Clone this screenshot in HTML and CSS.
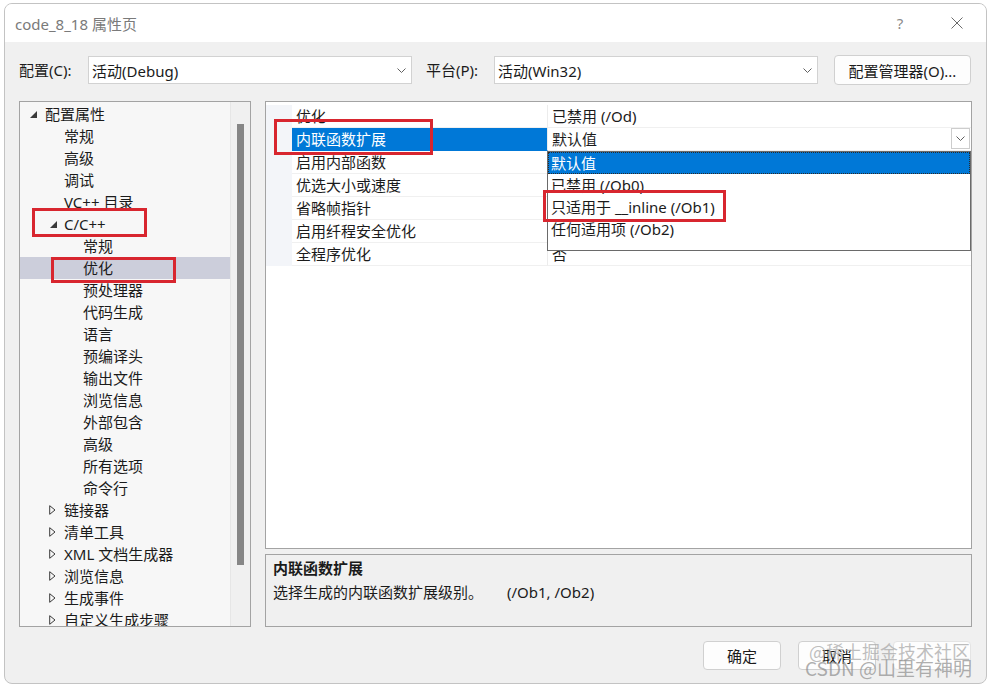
FILE: index.html
```html
<!DOCTYPE html>
<html lang="zh-CN">
<head>
<meta charset="utf-8">
<title>code_8_18 属性页</title>
<link rel="stylesheet" href="styles.css">
</head>
<body>
<div class="window">
  <div class="titlebar">
    <span class="title">code_8_18 属性页</span>
    <span class="help">?</span>
    <span class="close"><svg width="12" height="12" viewBox="0 0 12 12"><path d="M0.5 0.5 L11.5 11.5 M11.5 0.5 L0.5 11.5" stroke="#6a6a6a" stroke-width="1" fill="none"/></svg></span>
  </div>

  <div class="toolbar">
    <span class="label label-config">配置(C):</span>
    <div class="select"><span class="select-text">活动(Debug)</span><svg class="chev" width="9" height="5" viewBox="0 0 9 5"><polyline points="0.5,0.5 4.5,4.5 8.5,0.5" stroke="#606060" fill="none"/></svg></div>
    <span class="label label-platform">平台(P):</span>
    <div class="select"><span class="select-text">活动(Win32)</span><svg class="chev" width="9" height="5" viewBox="0 0 9 5"><polyline points="0.5,0.5 4.5,4.5 8.5,0.5" stroke="#606060" fill="none"/></svg></div>
    <button class="btn btn-manager">配置管理器(O)...</button>
  </div>

  <div class="main">
    <div class="tree">
      <div class="tree-list">
        <div class="node l0"><span class="tog"><svg width="9" height="9" viewBox="0 0 9 9"><polygon points="8,1 8,8 1,8" fill="#3a3a3a"/></svg></span><span>配置属性</span></div>
        <div class="node l1"><span class="tog"></span><span>常规</span></div>
        <div class="node l1"><span class="tog"></span><span>高级</span></div>
        <div class="node l1"><span class="tog"></span><span>调试</span></div>
        <div class="node l1"><span class="tog"></span><span>VC++ 目录</span></div>
        <div class="node l1"><span class="tog"><svg width="9" height="9" viewBox="0 0 9 9"><polygon points="8,1 8,8 1,8" fill="#3a3a3a"/></svg></span><span>C/C++</span></div>
        <div class="node l2"><span class="tog"></span><span>常规</span></div>
        <div class="node l2 selected"><span class="tog"></span><span>优化</span></div>
        <div class="node l2"><span class="tog"></span><span>预处理器</span></div>
        <div class="node l2"><span class="tog"></span><span>代码生成</span></div>
        <div class="node l2"><span class="tog"></span><span>语言</span></div>
        <div class="node l2"><span class="tog"></span><span>预编译头</span></div>
        <div class="node l2"><span class="tog"></span><span>输出文件</span></div>
        <div class="node l2"><span class="tog"></span><span>浏览信息</span></div>
        <div class="node l2"><span class="tog"></span><span>外部包含</span></div>
        <div class="node l2"><span class="tog"></span><span>高级</span></div>
        <div class="node l2"><span class="tog"></span><span>所有选项</span></div>
        <div class="node l2"><span class="tog"></span><span>命令行</span></div>
        <div class="node l1"><span class="tog"><svg width="7" height="10" viewBox="0 0 7 10"><polygon points="0.7,0.7 6,5 0.7,9.3" fill="none" stroke="#3a3a3a" stroke-width="1"/></svg></span><span>链接器</span></div>
        <div class="node l1"><span class="tog"><svg width="7" height="10" viewBox="0 0 7 10"><polygon points="0.7,0.7 6,5 0.7,9.3" fill="none" stroke="#3a3a3a" stroke-width="1"/></svg></span><span>清单工具</span></div>
        <div class="node l1"><span class="tog"><svg width="7" height="10" viewBox="0 0 7 10"><polygon points="0.7,0.7 6,5 0.7,9.3" fill="none" stroke="#3a3a3a" stroke-width="1"/></svg></span><span>XML 文档生成器</span></div>
        <div class="node l1"><span class="tog"><svg width="7" height="10" viewBox="0 0 7 10"><polygon points="0.7,0.7 6,5 0.7,9.3" fill="none" stroke="#3a3a3a" stroke-width="1"/></svg></span><span>浏览信息</span></div>
        <div class="node l1"><span class="tog"><svg width="7" height="10" viewBox="0 0 7 10"><polygon points="0.7,0.7 6,5 0.7,9.3" fill="none" stroke="#3a3a3a" stroke-width="1"/></svg></span><span>生成事件</span></div>
        <div class="node l1"><span class="tog"><svg width="7" height="10" viewBox="0 0 7 10"><polygon points="0.7,0.7 6,5 0.7,9.3" fill="none" stroke="#3a3a3a" stroke-width="1"/></svg></span><span>自定义生成步骤</span></div>
      </div>
      <div class="scrollbar"><div class="thumb"></div></div>
    </div>

    <div class="right">
      <div class="grid">
        <div class="rows">
          <div class="prow"><span class="gutter"></span><span class="pname">优化</span><span class="pval">已禁用 (/Od)</span></div>
          <div class="prow active"><span class="gutter"></span><span class="pname">内联函数扩展</span><span class="pval"><span class="pval-text">默认值</span><span class="dd-btn"><svg width="9" height="5" viewBox="0 0 9 5"><polyline points="0.5,0.5 4.5,4.5 8.5,0.5" stroke="#606060" fill="none"/></svg></span></span></div>
          <div class="prow"><span class="gutter"></span><span class="pname">启用内部函数</span><span class="pval"></span></div>
          <div class="prow"><span class="gutter"></span><span class="pname">优选大小或速度</span><span class="pval"></span></div>
          <div class="prow"><span class="gutter"></span><span class="pname">省略帧指针</span><span class="pval"></span></div>
          <div class="prow"><span class="gutter"></span><span class="pname">启用纤程安全优化</span><span class="pval"></span></div>
          <div class="prow"><span class="gutter"></span><span class="pname">全程序优化</span><span class="pval">否</span></div>
        </div>
        <div class="dropdown">
          <div class="opt current">默认值</div>
          <div class="opt">已禁用 (/Ob0)</div>
          <div class="opt">只适用于 __inline (/Ob1)</div>
          <div class="opt">任何适用项 (/Ob2)</div>
        </div>
      </div>
      <div class="desc">
        <div class="desc-title">内联函数扩展</div>
        <div class="desc-text">选择生成的内联函数扩展级别。<span class="desc-flags">(/Ob1, /Ob2)</span></div>
      </div>
    </div>
  </div>

  <div class="footer">
    <button class="btn btn-foot">确定</button>
    <button class="btn btn-foot">取消</button>
    <button class="btn btn-foot btn-disabled"></button>
  </div>

  <div class="mark mark-1"></div>
  <div class="mark mark-2"></div>
  <div class="mark mark-3"></div>
  <div class="mark mark-4"></div>

  <div class="wm wm-1">@稀土掘金技术社区</div>
  <div class="wm wm-2">CSDN @山里有神明</div>
</div>
</body>
</html>
```

FILE: styles.css
```css
* { box-sizing: border-box; }

html, body {
  margin: 0;
  padding: 0;
  background: #ffffff;
}

body {
  font-family: "Noto Sans", "Noto Sans CJK SC", sans-serif;
  font-size: 15px;
  color: #1b1b1b;
}

.window {
  position: relative;
  margin: 3px 0 0 4px;
  width: 983px;
  height: 681px;
  border: 1px solid #c3c3c3;
  border-radius: 8px;
  background: #f0f0f0;
  overflow: hidden;
  display: flex;
  flex-direction: column;
}

/* title bar */
.titlebar {
  height: 38px;
  flex: none;
  background: #ffffff;
  display: flex;
  align-items: center;
  padding-left: 10px;
  color: #7a7a7a;
}
.title { flex: 1; font-size: 15px; }
.help {
  width: 20px;
  text-align: center;
  margin-right: 35px;
  color: #8a8a8a;
  font-size: 15px;
}
.close {
  width: 24px;
  margin-right: 17px;
  display: flex;
  justify-content: center;
}

/* toolbar */
.toolbar {
  margin-top: 13px;
  height: 30px;
  flex: none;
  display: flex;
  align-items: center;
  padding-left: 14px;
}
.label { flex: none; line-height: 28px; }
.label-config { width: 69px; }
.label-platform { width: 68px; margin-left: 14px; }

.select {
  width: 324px;
  height: 28px;
  flex: none;
  background: #ffffff;
  border: 1px solid #d2d2d2;
  display: flex;
  align-items: center;
  padding-left: 3px;
  padding-right: 5px;
}
.select-text { flex: 1; }
.chev { flex: none; }

.btn {
  font-family: "Noto Sans", "Noto Sans CJK SC", sans-serif;
  font-size: 15px;
  color: #1b1b1b;
  background: #fdfdfd;
  border: 1px solid #d0d0d0;
  border-radius: 4px;
  padding: 0;
}
.btn-manager {
  margin-left: 16px;
  width: 137px;
  height: 30px;
}

/* main area */
.main {
  margin-top: 16px;
  height: 526px;
  flex: none;
  display: flex;
  gap: 14px;
  padding-left: 14px;
}

.tree {
  width: 232px;
  flex: none;
  border: 1px solid #a3a3a3;
  background: #f7f7f7;
  display: flex;
  overflow: hidden;
}
.tree-list {
  width: 210px;
  flex: none;
  padding-top: 1px;
  overflow: hidden;
}
.node {
  height: 22px;
  line-height: 22px;
  display: flex;
  align-items: center;
  white-space: nowrap;
}
.node.l0 { padding-left: 8px; }
.node.l1 { padding-left: 27px; }
.node.l2 { padding-left: 46px; }
.node.selected { background: #cccedb; }
.tog {
  width: 17px;
  flex: none;
  display: flex;
  align-items: center;
  padding-left: 1px;
}
.node.l1 .tog { padding-left: 2px; }

.scrollbar {
  flex: 1;
  background: #f0f0f0;
  border-left: 1px solid #e6e6e6;
  padding-top: 22px;
  display: flex;
  justify-content: center;
}
.thumb {
  width: 7px;
  height: 441px;
  background: #868686;
}

/* right column */
.right {
  width: 707px;
  flex: none;
  display: flex;
  flex-direction: column;
  gap: 5px;
}
.grid {
  position: relative;
  height: 448px;
  flex: none;
  border: 1px solid #a3a3a3;
  background: #ffffff;
  overflow: hidden;
}
.rows { padding-top: 3px; }
.prow {
  height: 23px;
  display: flex;
  white-space: nowrap;
}
.gutter {
  width: 26px;
  flex: none;
  background: #f3f5f9;
}
.pname {
  width: 256px;
  flex: none;
  padding-left: 4px;
  line-height: 22px;
  border-bottom: 1px solid #f0f0f0;
  border-right: 1px solid #ececec;
}
.pval {
  flex: 1;
  padding-left: 4px;
  line-height: 22px;
  border-bottom: 1px solid #f0f0f0;
  display: flex;
}
.prow.active .pname {
  background: #0078d7;
  color: #ffffff;
  border-bottom-color: #0078d7;
}
.pval-text { flex: 1; }
.dd-btn {
  width: 19px;
  height: 21px;
  margin-right: 1px;
  border: 1px solid #cdcdcd;
  background: #ffffff;
  display: flex;
  align-items: center;
  justify-content: center;
}

.dropdown {
  position: absolute;
  left: 281px;
  top: 49px;
  width: 424px;
  height: 100px;
  border: 1px solid #6a6a6a;
  background: #ffffff;
}
.opt {
  height: 22px;
  line-height: 22px;
  padding-left: 3px;
  white-space: nowrap;
}
.opt.current {
  background: #0078d7;
  color: #ffffff;
  outline: 1px dotted #2a2a2a;
  outline-offset: -1px;
}

.desc {
  height: 73px;
  flex: none;
  border: 1px solid #a3a3a3;
  background: #f0f0f0;
  padding-left: 7px;
  padding-top: 1px;
}
.desc-title {
  font-weight: bold;
  line-height: 24px;
}
.desc-text { line-height: 24px; }
.desc-flags { margin-left: 24px; }

/* footer */
.footer {
  margin-top: 14px;
  height: 29px;
  flex: none;
  display: flex;
  justify-content: flex-end;
  gap: 17px;
  padding-right: 15px;
}
.btn-foot {
  width: 78px;
  height: 29px;
}
.btn-disabled { border-color: #e4e4e4; }

/* annotation boxes */
.mark {
  position: absolute;
  border: 3px solid #d8262f;
}
.mark-1 { left: 27px; top: 204px; width: 115px; height: 29px; }
.mark-2 { left: 46px; top: 253px; width: 125px; height: 26px; }
.mark-3 { left: 269px; top: 115px; width: 159px; height: 36px; }
.mark-4 { left: 538px; top: 186px; width: 183px; height: 32px; }

/* watermarks */
.wm {
  position: absolute;
  font-family: "Noto Sans CJK SC", "Noto Sans", sans-serif;
  white-space: nowrap;
  pointer-events: none;
}
.wm-1 {
  left: 804px;
  top: 635px;
  font-size: 18px;
  line-height: 24px;
  color: rgba(170, 170, 170, 0.75);
}
.wm-2 {
  left: 800px;
  top: 651px;
  font-size: 19px;
  line-height: 26px;
  color: rgba(140, 140, 140, 0.7);
}
```
